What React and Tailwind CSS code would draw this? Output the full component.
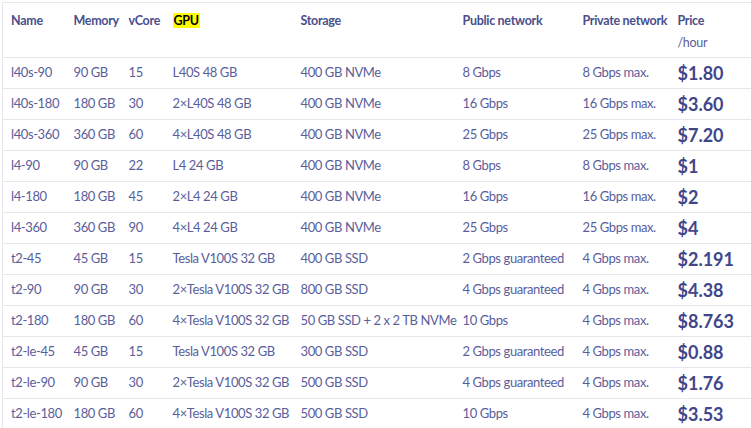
import React from "react";

const rows = [
    ["l40s-90", "90 GB", "15", "L40S 48 GB", "400 GB NVMe", "8 Gbps", "8 Gbps max.", "$1.80"],
    ["l40s-180", "180 GB", "30", "2×L40S 48 GB", "400 GB NVMe", "16 Gbps", "16 Gbps max.", "$3.60"],
    ["l40s-360", "360 GB", "60", "4×L40S 48 GB", "400 GB NVMe", "25 Gbps", "25 Gbps max.", "$7.20"],
    ["l4-90", "90 GB", "22", "L4 24 GB", "400 GB NVMe", "8 Gbps", "8 Gbps max.", "$1"],
    ["l4-180", "180 GB", "45", "2×L4 24 GB", "400 GB NVMe", "16 Gbps", "16 Gbps max.", "$2"],
    ["l4-360", "360 GB", "90", "4×L4 24 GB", "400 GB NVMe", "25 Gbps", "25 Gbps max.", "$4"],
    ["t2-45", "45 GB", "15", "Tesla V100S 32 GB", "400 GB SSD", "2 Gbps guaranteed", "4 Gbps max.", "$2.191"],
    ["t2-90", "90 GB", "30", "2×Tesla V100S 32 GB", "800 GB SSD", "4 Gbps guaranteed", "4 Gbps max.", "$4.38"],
    ["t2-180", "180 GB", "60", "4×Tesla V100S 32 GB", "50 GB SSD + 2 x 2 TB NVMe", "10 Gbps", "4 Gbps max.", "$8.763"],
    ["t2-le-45", "45 GB", "15", "Tesla V100S 32 GB", "300 GB SSD", "2 Gbps guaranteed", "4 Gbps max.", "$0.88"],
    ["t2-le-90", "90 GB", "30", "2×Tesla V100S 32 GB", "500 GB SSD", "4 Gbps guaranteed", "4 Gbps max.", "$1.76"],
    ["t2-le-180", "180 GB", "60", "4×Tesla V100S 32 GB", "500 GB SSD", "10 Gbps", "4 Gbps max.", "$3.53"],
];

const widths = ["w-[63px]", "w-[55px]", "w-[44px]", "w-[128px]", "w-[162px]", "w-[120px]", "w-[95px]", "w-[100px]"];

const headers = ["Name", "Memory", "vCore", "GPU", "Storage", "Public network", "Private network"];

export default function App() {
    return (
        <div
            className="w-[751px] h-[428px] overflow-hidden bg-white"
            style={{ fontFamily: "Lato, 'Noto Sans', sans-serif" }}
        >
            <table className="ml-[2px] mt-[2px] w-[767px] table-fixed border-collapse border-l border-t border-[#e6e6ec]">
                <colgroup>
                    {widths.map((w, i) => (
                        <col key={i} className={w} />
                    ))}
                </colgroup>
                <thead>
                    <tr className="h-[55px] border-b border-[#e6e6ec] text-[12.5px] tracking-[-0.3px] font-bold text-[#4a4f8c]">
                        {headers.map((h) => (
                            <th key={h} className="pl-2 pt-[9px] align-top text-left font-bold whitespace-nowrap">
                                {h === "GPU" ? (
                                    <span className="bg-[#ffff00] text-black px-px">GPU</span>
                                ) : (
                                    h
                                )}
                            </th>
                        ))}
                        <th className="pl-2 pt-[9px] align-top text-left font-bold">
                            Price
                            <div className="mt-[3px] font-normal text-[#5b5f9a]">/hour</div>
                        </th>
                    </tr>
                </thead>
                <tbody>
                    {rows.map((r) => (
                        <tr key={r[0]} className="h-[31px] border-b border-[#e6e6ec] text-[13px] tracking-[-0.4px] text-[#5a5e9b]">
                            {r.slice(0, 7).map((c, i) => (
                                <td key={i} className="pl-2 whitespace-nowrap align-middle">
                                    {c}
                                </td>
                            ))}
                            <td className="pl-2 whitespace-nowrap align-middle text-[18px] tracking-normal font-bold text-[#40468a]">
                                {r[7]}
                            </td>
                        </tr>
                    ))}
                </tbody>
            </table>
        </div>
    );
}
